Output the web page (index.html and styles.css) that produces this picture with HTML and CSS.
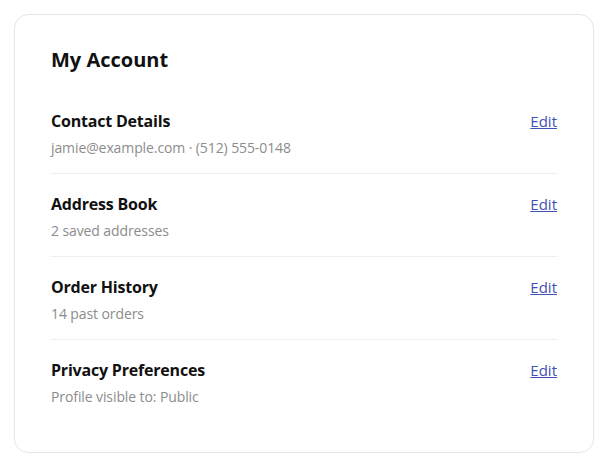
FILE: index.html
```html
<!DOCTYPE html>
<html lang="en">
<head>
<meta charset="utf-8">
<title>My Account</title>
<link rel="stylesheet" href="styles.css">
</head>
<body>
<section class="card">
  <h1 class="card-title">My Account</h1>
  <ul class="rows">
    <li class="row">
      <div class="row-text">
        <div class="row-title">Contact Details</div>
        <div class="row-sub">jamie@example.com · (512) 555-0148</div>
      </div>
      <a class="edit" href="#">Edit</a>
    </li>
    <li class="row">
      <div class="row-text">
        <div class="row-title">Address Book</div>
        <div class="row-sub">2 saved addresses</div>
      </div>
      <a class="edit" href="#">Edit</a>
    </li>
    <li class="row">
      <div class="row-text">
        <div class="row-title">Order History</div>
        <div class="row-sub">14 past orders</div>
      </div>
      <a class="edit" href="#">Edit</a>
    </li>
    <li class="row">
      <div class="row-text">
        <div class="row-title">Privacy Preferences</div>
        <div class="row-sub">Profile visible to: Public</div>
      </div>
      <a class="edit" href="#">Edit</a>
    </li>
  </ul>
</section>
</body>
</html>
```

FILE: styles.css
```css
* { box-sizing: border-box; }
html, body { background: #ffffff; }
body {
  margin: 0;
  padding: 14px;
  font-family: "Open Sans", "Noto Sans", "Liberation Sans", sans-serif;
  color: #111111;
}
.card {
  width: 580px;
  border: 1px solid #e6e6e6;
  border-radius: 14px;
  padding: 31px 36px 30px;
  background: #ffffff;
}
.card-title {
  margin: 0 0 16px;
  font-size: 20px;
  line-height: 28px;
  font-weight: 700;
}
.rows {
  list-style: none;
  margin: 0;
  padding: 0;
}
.row {
  display: flex;
  justify-content: space-between;
  align-items: flex-start;
  padding: 18px 0 15px;
  border-bottom: 1px solid #eeeeee;
}
.row:first-child { padding-top: 19px; }
.row:last-child { border-bottom: none; }
.row-title {
  font-size: 16px;
  line-height: 24px;
  font-weight: 700;
  letter-spacing: -0.2px;
}
.row-sub {
  margin-top: 5px;
  font-size: 14px;
  line-height: 20px;
  color: #8c8c8c;
  letter-spacing: -0.1px;
}
.edit {
  font-size: 15px;
  line-height: 24px;
  color: #3f51b5;
  text-decoration: underline;
}
```
